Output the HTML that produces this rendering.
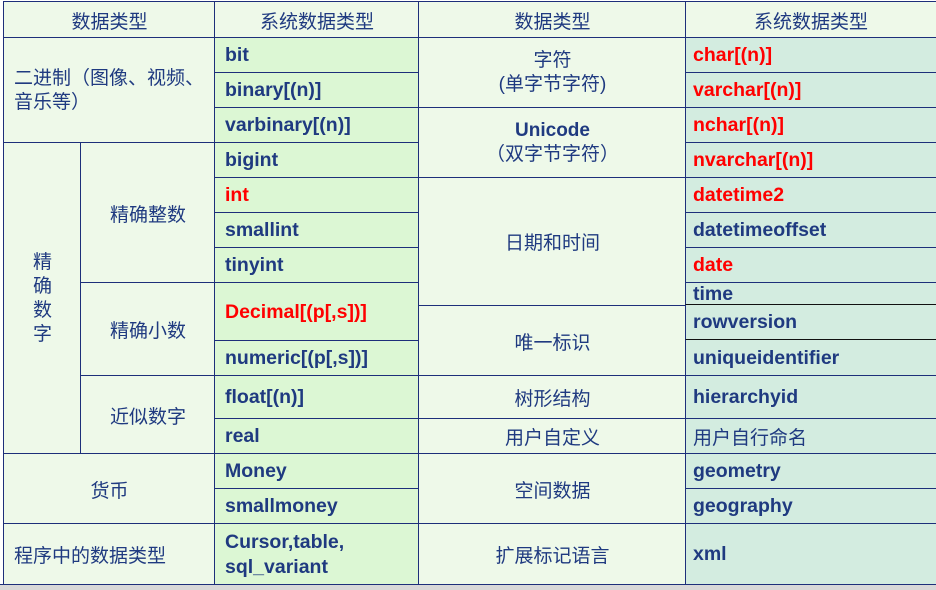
<!DOCTYPE html>
<html><head><meta charset="utf-8"><style>
body{margin:0;width:936px;height:590px;overflow:hidden;background:#fff;position:relative;font-family:"Liberation Sans","Noto Sans CJK SC",sans-serif;}
.c{position:absolute;box-sizing:border-box;border-left:1.5px solid #1d2f7a;border-top:1.5px solid #1d2f7a;display:flex;align-items:center;color:#1f3a80;font-size:19.5px;}
.a{background:#eef9e9;justify-content:center;text-align:center;font-size:19px;}
.b{background:#dcf7d4;font-weight:bold;padding-left:10px;}
.d{background:#d3ece0;font-weight:bold;padding-left:7px;}
.r{color:#f00;}
.l{justify-content:flex-start;padding-left:10px;text-align:left;}
.n{font-weight:normal;font-size:19px;}
</style></head><body>
<div class="c a" style="left:3px;top:1px;width:212px;height:37px">数据类型</div>
<div class="c a" style="left:214px;top:1px;width:205px;height:37px">系统数据类型</div>
<div class="c a" style="left:418px;top:1px;width:268px;height:37px">数据类型</div>
<div class="c a" style="left:685px;top:1px;width:251px;height:37px">系统数据类型</div>

<div class="c a l" style="left:3px;top:37px;width:212px;height:106px;line-height:24px;padding-left:10px">二进制（图像、视频、<br>音乐等）</div>
<div class="c a" style="left:3px;top:142px;width:78px;height:312px;line-height:24px">精<br>确<br>数<br>字</div>
<div class="c a" style="left:80px;top:142px;width:135px;height:141px">精确整数</div>
<div class="c a" style="left:80px;top:282px;width:135px;height:94px">精确小数</div>
<div class="c a" style="left:80px;top:375px;width:135px;height:79px">近似数字</div>
<div class="c a" style="left:3px;top:453px;width:212px;height:71px">货币</div>
<div class="c a l" style="left:3px;top:523px;width:212px;height:62px">程序中的数据类型</div>

<div class="c b" style="left:214px;top:37px;width:205px;height:36px">bit</div>
<div class="c b" style="left:214px;top:72px;width:205px;height:36px">binary[(n)]</div>
<div class="c b" style="left:214px;top:107px;width:205px;height:36px">varbinary[(n)]</div>
<div class="c b" style="left:214px;top:142px;width:205px;height:36px">bigint</div>
<div class="c b r" style="left:214px;top:177px;width:205px;height:36px">int</div>
<div class="c b" style="left:214px;top:212px;width:205px;height:36px">smallint</div>
<div class="c b" style="left:214px;top:247px;width:205px;height:36px">tinyint</div>
<div class="c b r" style="left:214px;top:282px;width:205px;height:59px">Decimal[(p[,s])]</div>
<div class="c b" style="left:214px;top:340px;width:205px;height:36px">numeric[(p[,s])]</div>
<div class="c b" style="left:214px;top:375px;width:205px;height:44px">float[(n)]</div>
<div class="c b" style="left:214px;top:418px;width:205px;height:36px">real</div>
<div class="c b" style="left:214px;top:453px;width:205px;height:36px">Money</div>
<div class="c b" style="left:214px;top:488px;width:205px;height:36px">smallmoney</div>
<div class="c b" style="left:214px;top:523px;width:205px;height:62px;line-height:25px">Cursor,table,<br>sql_variant</div>

<div class="c a" style="left:418px;top:37px;width:268px;height:71px;line-height:24px">字符<br>(单字节字符)</div>
<div class="c a" style="left:418px;top:107px;width:268px;height:71px;line-height:24px"><span><b>Unicode</b><br>（双字节字符）</span></div>
<div class="c a" style="left:418px;top:177px;width:268px;height:129px;border-bottom:1.5px solid #111">日期和时间</div>
<div class="c a" style="left:418px;top:305px;width:268px;height:71px">唯一标识</div>
<div class="c a" style="left:418px;top:375px;width:268px;height:44px">树形结构</div>
<div class="c a" style="left:418px;top:418px;width:268px;height:36px">用户自定义</div>
<div class="c a" style="left:418px;top:453px;width:268px;height:71px">空间数据</div>
<div class="c a" style="left:418px;top:523px;width:268px;height:62px">扩展标记语言</div>

<div class="c d r" style="left:685px;top:37px;width:251px;height:36px">char[(n)]</div>
<div class="c d r" style="left:685px;top:72px;width:251px;height:36px">varchar[(n)]</div>
<div class="c d r" style="left:685px;top:107px;width:251px;height:36px">nchar[(n)]</div>
<div class="c d r" style="left:685px;top:142px;width:251px;height:36px">nvarchar[(n)]</div>
<div class="c d r" style="left:685px;top:177px;width:251px;height:36px">datetime2</div>
<div class="c d" style="left:685px;top:212px;width:251px;height:36px">datetimeoffset</div>
<div class="c d r" style="left:685px;top:247px;width:251px;height:36px">date</div>
<div class="c d" style="left:685px;top:282px;width:251px;height:24px">time</div>
<div class="c d" style="left:685px;top:304px;width:251px;height:36px;border-top:1.5px solid #111">rowversion</div>
<div class="c d" style="left:685px;top:339px;width:251px;height:37px;border-top:1.5px solid #111">uniqueidentifier</div>
<div class="c d" style="left:685px;top:375px;width:251px;height:44px">hierarchyid</div>
<div class="c d n" style="left:685px;top:418px;width:251px;height:36px">用户自行命名</div>
<div class="c d" style="left:685px;top:453px;width:251px;height:36px">geometry</div>
<div class="c d" style="left:685px;top:488px;width:251px;height:36px">geography</div>
<div class="c d" style="left:685px;top:523px;width:251px;height:62px">xml</div>

<div style="position:absolute;left:0;top:584px;width:936px;height:6px;background:#d8d8d8;border-top:1.5px solid #1d2f7a;box-sizing:border-box"></div>
</body></html>
